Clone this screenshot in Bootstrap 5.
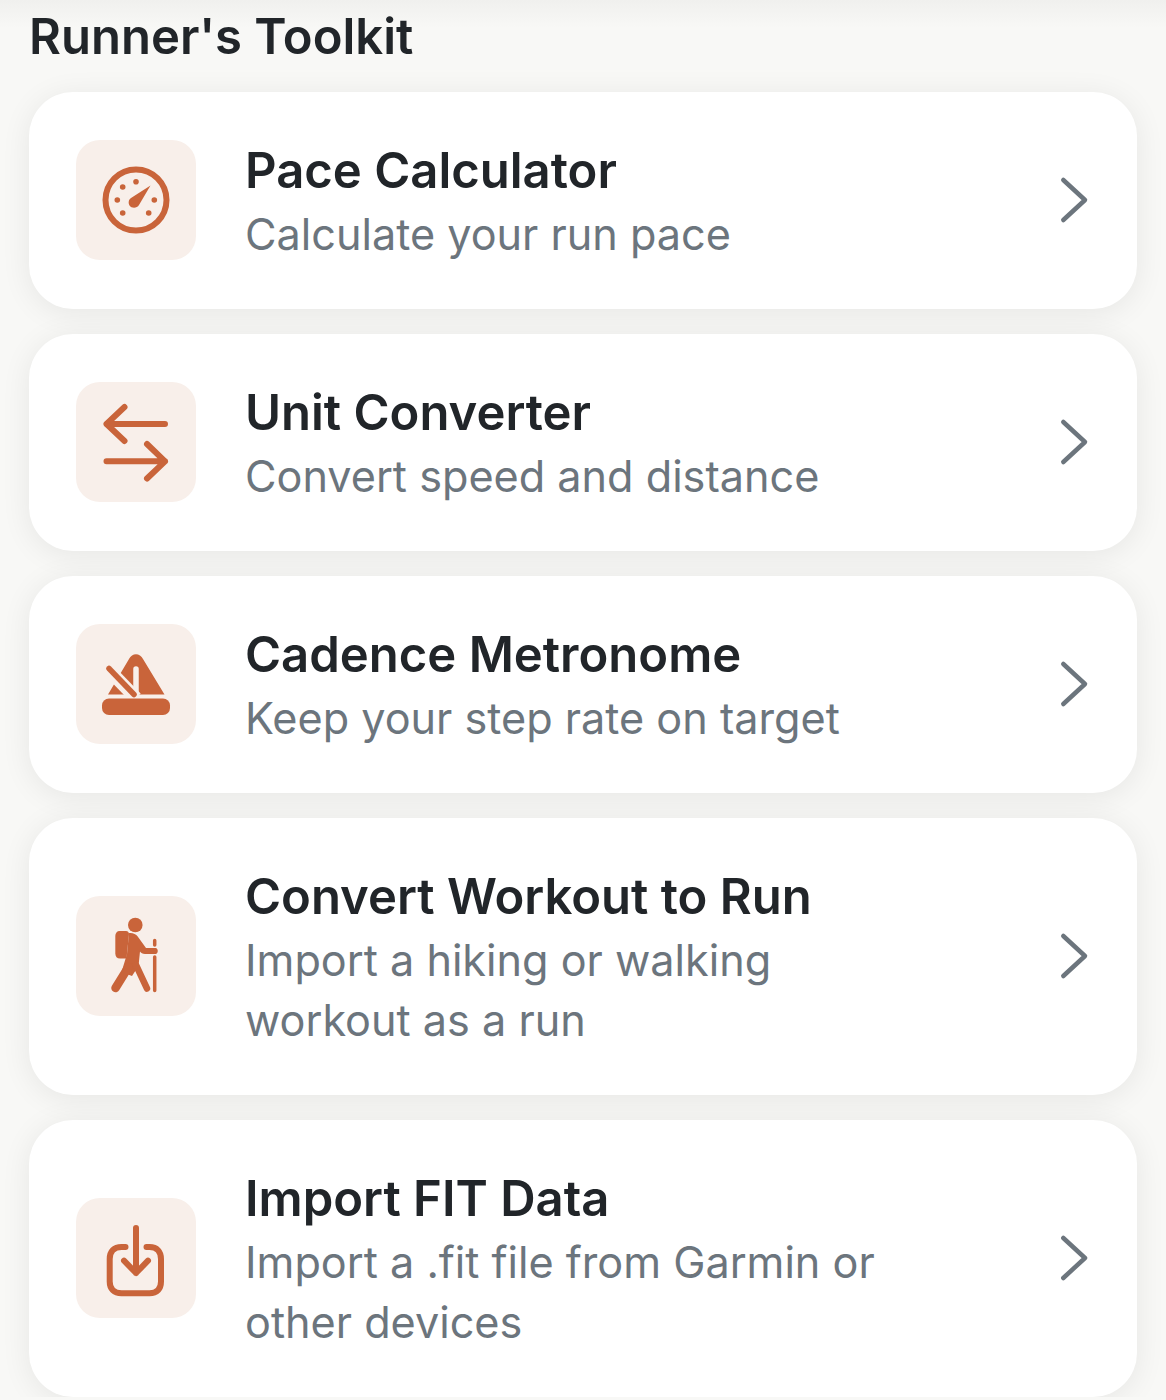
<!DOCTYPE html>
<html lang="en">
<head>
  <meta charset="UTF-8">
  <meta name="viewport" content="width=device-width, initial-scale=1.0">
  <title>Runner's Toolkit</title>
  <link rel="stylesheet" href="https://cdn.jsdelivr.net/npm/bootstrap@5.3.0/dist/css/bootstrap.min.css">
  <script src="https://cdn.jsdelivr.net/npm/bootstrap@5.3.0/dist/js/bootstrap.bundle.min.js"></script>

  <style>
    body {
      background: linear-gradient(#f0f0ee, #f8f8f6 28px) no-repeat #f8f8f6;
      font-family: "Inter", "Liberation Sans", sans-serif;
      color: #212529;
    }

    .toolkit-page {
      padding: 8px 29px 0;
    }

    .toolkit-title {
      font-size: 49px;
      line-height: 58px;
      font-weight: 600;
      margin-bottom: 26px;
      color: #212529;
    }

    .tool-list {
      gap: 25px;
    }

    /* Tool rows */
    .tool-card {
      border: none;
      border-radius: 44px;
      background: #fff;
      padding: 48px 48px 49px 47px;
      gap: 49px;
      box-shadow: 0 4px 30px rgba(0, 0, 0, 0.075);
    }

    .tool-icon {
      width: 120px;
      height: 120px;
      border-radius: 24px;
      background: #f8efea;
    }

    .tool-icon svg {
      display: block;
    }

    .tool-name {
      font-size: 49px;
      line-height: 60px;
      font-weight: 600;
      color: #212529;
      padding-top: 1px;
      margin-bottom: 3px;
    }

    .tool-desc {
      font-size: 43.2px;
      line-height: 60px;
      color: #6c757d;
      margin-bottom: -4px;
    }

    .ico-line {
      fill: none;
      stroke: #c9643a;
      stroke-width: 6;
      stroke-linecap: round;
      stroke-linejoin: round;
    }

    .ico-fill {
      fill: #c9643a;
    }
  </style>
</head>
<body>

<div class="toolkit-page">
  <h1 class="toolkit-title">Runner's Toolkit</h1>

  <div class="tool-list d-flex flex-column">

    <!-- Pace Calculator -->
    <div class="card tool-card flex-row align-items-center">
      <div class="tool-icon flex-shrink-0">
        <svg width="120" height="120" viewBox="0 0 120 120">
          <circle class="ico-line" cx="60" cy="60" r="30.5"/>
          <circle class="ico-fill" cx="60" cy="41.7" r="2.8"/>
          <circle class="ico-fill" cx="46.7" cy="47" r="2.8"/>
          <circle class="ico-fill" cx="41.3" cy="60" r="2.8"/>
          <circle class="ico-fill" cx="46.7" cy="73" r="2.8"/>
          <circle class="ico-fill" cx="72.7" cy="73" r="2.8"/>
          <circle class="ico-fill" cx="78.3" cy="60" r="2.8"/>
          <path class="ico-fill" d="M74.5 45.5 L63 65 C61 68.500 55.500 68.500 53.500 65.500 C52 63 52.500 59.500 55 58 Z"/>
        </svg>
      </div>
      <div class="flex-grow-1">
        <div class="tool-name">Pace Calculator</div>
        <div class="tool-desc">Calculate your run pace</div>
      </div>
      <svg class="flex-shrink-0" width="30" height="50" viewBox="0 0 30 50" fill="none" stroke="#6c757d" stroke-width="4.5" stroke-linecap="round" stroke-linejoin="round"><path d="M4.3 5 L26 25 L4.3 45"/></svg>
    </div>

    <!-- Unit Converter -->
    <div class="card tool-card flex-row align-items-center">
      <div class="tool-icon flex-shrink-0">
        <svg width="120" height="120" viewBox="0 0 120 120">
          <path class="ico-line" d="M89 42 H30.5 M48.5 25 L30.5 42 L48.5 59"/>
          <path class="ico-line" d="M30.5 79.3 H89 M71 62 L89 79.3 L71 96.5"/>
        </svg>
      </div>
      <div class="flex-grow-1">
        <div class="tool-name">Unit Converter</div>
        <div class="tool-desc">Convert speed and distance</div>
      </div>
      <svg class="flex-shrink-0" width="30" height="50" viewBox="0 0 30 50" fill="none" stroke="#6c757d" stroke-width="4.5" stroke-linecap="round" stroke-linejoin="round"><path d="M4.3 5 L26 25 L4.3 45"/></svg>
    </div>

    <!-- Cadence Metronome -->
    <div class="card tool-card flex-row align-items-center">
      <div class="tool-icon flex-shrink-0">
        <svg width="120" height="120" viewBox="0 0 120 120">
          <path class="ico-fill" d="M53 35 C56 28.500 64 28.500 67 35 L88.500 70.500 H32 Z"/>
          <path d="M60 45 V72" fill="none" stroke="#f8efea" stroke-width="5.500" stroke-linecap="round"/>
          <path d="M28 41 L60 74" fill="none" stroke="#f8efea" stroke-width="13"/>
          <path d="M33 44.500 L58 70.500" fill="none" stroke="#c9643a" stroke-width="5.500" stroke-linecap="round"/>
          <rect x="26" y="74.500" width="68" height="16.500" rx="7" fill="#c9643a"/>
        </svg>
      </div>
      <div class="flex-grow-1">
        <div class="tool-name">Cadence Metronome</div>
        <div class="tool-desc">Keep your step rate on target</div>
      </div>
      <svg class="flex-shrink-0" width="30" height="50" viewBox="0 0 30 50" fill="none" stroke="#6c757d" stroke-width="4.5" stroke-linecap="round" stroke-linejoin="round"><path d="M4.3 5 L26 25 L4.3 45"/></svg>
    </div>

    <!-- Convert Workout to Run -->
    <div class="card tool-card flex-row align-items-center">
      <div class="tool-icon flex-shrink-0">
        <svg width="120" height="120" viewBox="0 0 120 120">
          <circle class="ico-fill" cx="59.300" cy="29" r="7.300"/>
          <path class="ico-fill" d="M43.500 35 H50 C52 35 53 36.500 53 38 L50.500 62.500 H44 C41 62.500 39.300 60.500 39.300 57.500 V40 C39.300 37 41 35 43.500 35 Z"/>
          <path class="ico-fill" d="M53 37 C56.500 36.500 60 38 61.700 40.500 L70 52 H79.500 C82.500 52 82.500 58 79.500 58 H69 C66.500 58 65 57 64 55.500 L62.500 70 L56 80 L45.500 76 L51 58 Z"/>
          <path d="M52.500 71 L39.500 92" fill="none" stroke="#c9643a" stroke-width="8.500" stroke-linecap="round"/>
          <path d="M60 69 L71 92.500" fill="none" stroke="#c9643a" stroke-width="6.500" stroke-linecap="round"/>
          <path d="M78.700 44.500 V49 M78.700 61 V94.500" fill="none" stroke="#c9643a" stroke-width="3.500" stroke-linecap="round"/>
        </svg>
      </div>
      <div class="flex-grow-1">
        <div class="tool-name">Convert Workout to Run</div>
        <div class="tool-desc">Import a hiking or walking<br>workout as a run</div>
      </div>
      <svg class="flex-shrink-0" width="30" height="50" viewBox="0 0 30 50" fill="none" stroke="#6c757d" stroke-width="4.5" stroke-linecap="round" stroke-linejoin="round"><path d="M4.3 5 L26 25 L4.3 45"/></svg>
    </div>

    <!-- Import FIT Data -->
    <div class="card tool-card flex-row align-items-center">
      <div class="tool-icon flex-shrink-0">
        <svg width="120" height="120" viewBox="0 0 120 120">
          <path class="ico-line" d="M49.500 49 H45.500 C38 49 33.700 53.500 33.700 61 V83.500 C33.700 91 38 95.300 45.500 95.300 H73.500 C81 95.300 85 91 85 83.500 V61 C85 53.500 81 49 73.500 49 H70.500"/>
          <path class="ico-line" d="M60 30 V75 M48 62.700 L60 75 L72 62.700"/>
        </svg>
      </div>
      <div class="flex-grow-1">
        <div class="tool-name">Import FIT Data</div>
        <div class="tool-desc">Import a .fit file from Garmin or<br>other devices</div>
      </div>
      <svg class="flex-shrink-0" width="30" height="50" viewBox="0 0 30 50" fill="none" stroke="#6c757d" stroke-width="4.5" stroke-linecap="round" stroke-linejoin="round"><path d="M4.3 5 L26 25 L4.3 45"/></svg>
    </div>

  </div>
</div>

</body>
</html>
